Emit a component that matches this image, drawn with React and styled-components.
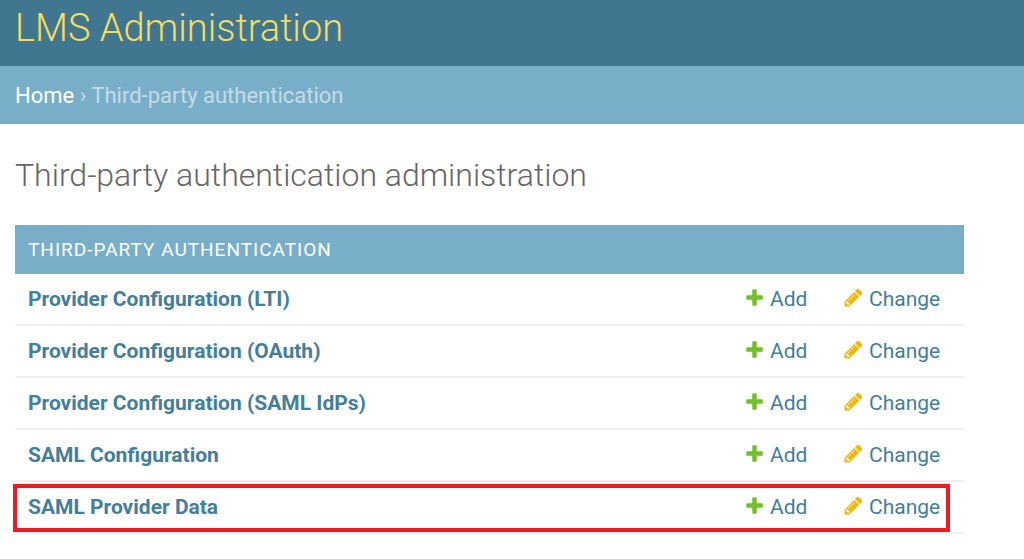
import React from 'react'
import styled, { createGlobalStyle } from 'styled-components'

const models = [
  { name: 'Provider Configuration (LTI)' },
  { name: 'Provider Configuration (OAuth)' },
  { name: 'Provider Configuration (SAML IdPs)' },
  { name: 'SAML Configuration' },
  { name: 'SAML Provider Data', marked: true },
]

const AddIcon = () => (
  <Icon viewBox='0 0 1792 1792' aria-hidden='true'>
    <path
      fill='#70bf2b'
      d='M1600 796v192q0 40-28 68t-68 28h-416v416q0 40-28 68t-68 28h-192q-40 0-68-28t-28-68v-416h-416q-40 0-68-28t-28-68v-192q0-40 28-68t68-28h416v-416q0-40 28-68t68-28h192q40 0 68 28t28 68v416h416q40 0 68 28t28 68z'
    />
  </Icon>
)

const ChangeIcon = () => (
  <Icon viewBox='0 0 1792 1792' aria-hidden='true'>
    <path
      fill='#efb80b'
      d='M491 1536l91-91-235-235-91 91v107h128v128h107zm523-928q0-22-22-22-10 0-17 7l-542 542q-7 7-7 17 0 22 22 22 10 0 17-7l542-542q7-7 7-17zm-54-192l416 416-832 832h-416v-416zm683 96q0 53-37 90l-166 166-416-416 166-165q36-38 90-38 53 0 91 38l235 234q37 39 37 91z'
    />
  </Icon>
)

const App = () => {
  return (
    <>
      <GlobalStyle />
      <Header>
        <SiteName>LMS Administration</SiteName>
      </Header>
      <Breadcrumbs aria-label='Breadcrumbs'>
        <a href='#home'>Home</a> › Third-party authentication
      </Breadcrumbs>
      <Content>
        <PageTitle>Third-party authentication administration</PageTitle>
        <ModelTable>
          <caption>Third-party authentication</caption>
          <tbody>
            {models.map(({ name, marked }) => (
              <ModelRow key={name} $marked={marked}>
                <th scope='row'>
                  <a href='#model'>{name}</a>
                </th>
                <ActionCell $width='99px'>
                  <ActionLink href='#add'>
                    <AddIcon />
                    Add
                  </ActionLink>
                </ActionCell>
                <ActionCell $width='121px'>
                  <ActionLink href='#change'>
                    <ChangeIcon />
                    Change
                  </ActionLink>
                </ActionCell>
              </ModelRow>
            ))}
          </tbody>
        </ModelTable>
      </Content>
    </>
  )
}

const GlobalStyle = createGlobalStyle`
  * {
    box-sizing: border-box;
  }
  body {
    margin: 0;
    background: #fff;
    color: #666;
    font-family: Roboto, 'Liberation Sans', sans-serif;
    font-size: 21px;
  }
  a {
    color: #447e9b;
    text-decoration: none;
  }
`
const Header = styled.header`
  padding: 5px 15px 15px;
  background: #417690;
`
const SiteName = styled.h1`
  margin: 0;
  color: #f5dd5d;
  font-size: 38px;
  font-weight: 300;
  line-height: 46px;
`
const Breadcrumbs = styled.nav`
  padding: 17px 15px 15px;
  background: #79aec8;
  color: #c4dce8;
  font-size: 22px;
  line-height: 26px;
  a {
    color: #fff;
  }
`
const Content = styled.main`
  padding: 31px 60px 24px 15px;
`
const PageTitle = styled.h2`
  margin: 0 0 30px;
  font-size: 32px;
  font-weight: 300;
  line-height: 40px;
`
const ModelTable = styled.table`
  width: 100%;
  border-collapse: separate;
  border-spacing: 0;
  caption {
    padding: 13px 13px 12px;
    background: #79aec8;
    color: #fff;
    font-size: 19px;
    letter-spacing: 1px;
    line-height: 24px;
    text-align: left;
    text-transform: uppercase;
  }
`
const ModelRow = styled.tr`
  position: relative;
  th,
  td {
    padding: 13px 0;
    border-bottom: 2px solid #f0f0f0;
    line-height: 24px;
    text-align: left;
  }
  th {
    padding-left: 13px;
    font-weight: 700;
  }
  &::after {
    content: ${({ $marked }) => ($marked ? "''" : 'none')};
    position: absolute;
    inset: 2px 14px 2px -2px;
    border: 4px solid #ed1c24;
    pointer-events: none;
  }
`
const ActionCell = styled.td`
  width: ${({ $width }) => $width};
`
const ActionLink = styled.a`
  display: flex;
  align-items: center;
  column-gap: 5px;
`
const Icon = styled.svg`
  flex: none;
  width: 21px;
  height: 21px;
  margin-bottom: 3px;
`
export default App
